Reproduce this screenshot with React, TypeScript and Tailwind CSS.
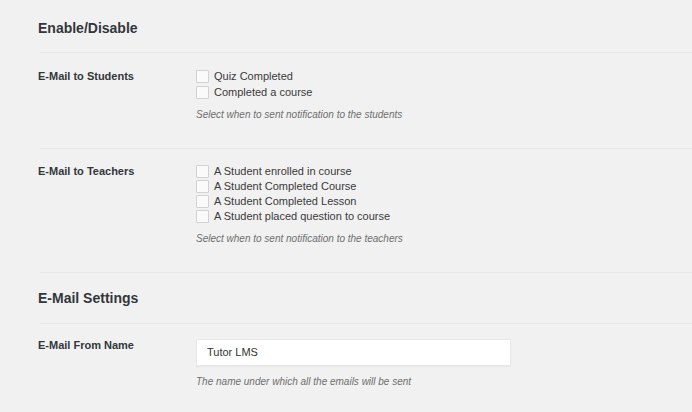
import React from "react"

const students = ["Quiz Completed", "Completed a course"]
const teachers = [
  "A Student enrolled in course",
  "A Student Completed Course",
  "A Student Completed Lesson",
  "A Student placed question to course",
]

function CheckList({ items, rowH }: { items: string[]; rowH: string }) {
  return (
    <div className="flex flex-col">
      {items.map((item) => (
        <label key={item} className={`flex items-center gap-[5px] ${rowH}`}>
          <span className="block w-[13px] h-[13px] border border-[#d2d2d2] bg-[#fafafa] rounded-[1px]" />
          <span className="text-[11px] text-[#3a3a3a] leading-none">{item}</span>
        </label>
      ))}
    </div>
  )
}

function Hint({ children }: { children: React.ReactNode }) {
  return <p className="mt-[8px] text-[10px] leading-[13px] italic text-[#6e6e6e]">{children}</p>
}

export default function App() {
  return (
    <div className="w-[692px] h-[412px] overflow-hidden bg-[#f1f1f1] font-['Liberation_Sans',Arial,sans-serif] text-[#23282d]">
      <div className="pl-[38px]">
        <div className="h-[52px] pt-[19px]">
          <h2 className="text-[14px] leading-[18px] font-bold text-[#32373c]">Enable/Disable</h2>
        </div>

        <div className="ml-[2px] border-t border-[#e8e8e8] h-[96px]">
          <div className="flex pt-[15px] -ml-[2px]">
            <div className="w-[158px] text-[11px] leading-[16px] font-bold text-[#32373c]">E-Mail to Students</div>
            <div>
              <CheckList items={students} rowH="h-[16px]" />
              <Hint>Select when to sent notification to the students</Hint>
            </div>
          </div>
        </div>

        <div className="ml-[2px] border-t border-[#e8e8e8] h-[124px]">
          <div className="flex pt-[15px] -ml-[2px]">
            <div className="w-[158px] text-[11px] leading-[15px] font-bold text-[#32373c]">E-Mail to Teachers</div>
            <div>
              <CheckList items={teachers} rowH="h-[15px]" />
              <Hint>Select when to sent notification to the teachers</Hint>
            </div>
          </div>
        </div>

        <div className="ml-[2px] border-t border-[#e8e8e8] h-[51px]">
          <h2 className="-ml-[2px] pt-[16px] text-[14px] leading-[18px] font-bold text-[#32373c]">E-Mail Settings</h2>
        </div>

        <div className="ml-[2px] border-t border-[#e8e8e8] h-[90px]">
          <div className="flex -ml-[2px]">
            <div className="w-[158px] pt-[13px] text-[11px] leading-[16px] font-bold text-[#32373c]">E-Mail From Name</div>
            <div className="pt-[15px]">
              <div className="w-[315px] h-[27px] bg-white border border-[#e8e8e8] shadow-[0_1px_1px_rgba(0,0,0,0.04)] flex items-center pl-[10px] text-[11px] text-[#333]">
                Tutor LMS
              </div>
              <p className="mt-[9px] text-[10px] leading-[13px] italic text-[#6e6e6e]">
                The name under which all the emails will be sent
              </p>
            </div>
          </div>
        </div>
      </div>
    </div>
  )
}
